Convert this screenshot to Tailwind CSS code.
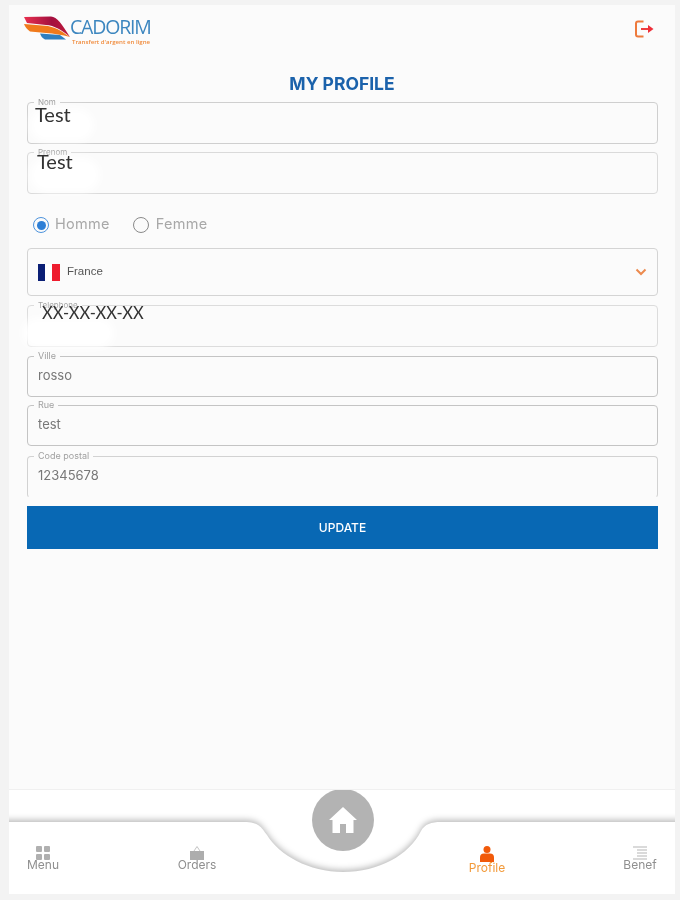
<!DOCTYPE html>
<html lang="en">
<head>
    <meta charset="UTF-8">
    <meta name="viewport" content="width=device-width, initial-scale=1.0">
    <title>Cadorim - My Profile</title>
    <script src="https://cdn.jsdelivr.net/npm/@tailwindcss/browser@4"></script>
</head>
<body class="bg-[#f3f3f3]">
    <div class="h-[900px] w-[680px] overflow-hidden pt-[5px] pl-[9px] pr-[5px] pb-[6px] font-['Inter',sans-serif] blur-[0.6px]">
        <div class="flex h-full flex-col bg-[#fbfbfb]">

            <!-- header -->
            <header class="flex h-[60px] shrink-0 items-start justify-between pl-[15px] pr-[21px]">
                <div class="flex pt-[11px]">
                    <svg width="47" height="24" viewBox="0 0 47 24" class="shrink-0">
                        <defs>
                            <linearGradient id="wingTop" x1="0" y1="0" x2="1" y2="0">
                                <stop offset="0" stop-color="#e8304f"/>
                                <stop offset="0.6" stop-color="#a3103f"/>
                                <stop offset="1" stop-color="#c01a3a"/>
                            </linearGradient>
                        </defs>
                        <path d="M0 1 L27 0.500 C33 1 38 8 46 21 C38 14 30 9.500 22 9 L3 7 Z" fill="url(#wingTop)"/>
                        <path d="M0 8 L24 10 C34 12 40 17 46 21 C38 19 30 17.500 22 17 L6 15.500 C3 13 1 11 0 8 Z" fill="#f07a1c"/>
                        <path d="M16 17.500 L36 19 L42 23.500 L21 23.500 C18 22 17 20 16 17.500 Z" fill="#2f7fc0"/>
                    </svg>
                    <div class="ml-[-1px] flex w-[82px] flex-col">
                        <span class="font-['Open_Sans',sans-serif] text-[19.500px] leading-[22px] tracking-[-1.200px] text-[#3c86bf]">CADORIM</span>
                        <span class="pl-[2px] font-['Open_Sans',sans-serif] text-[6.100px] font-semibold leading-[8px] whitespace-nowrap text-[#f08a3a]">Transfert d'argent en ligne</span>
                    </div>
                </div>
                <svg width="19" height="18" viewBox="0 0 19 18" fill="none" class="mt-[15px]">
                    <path d="M8.500 1.500 H3 Q1 1.500 1 3.500 V14.500 Q1 16.500 3 16.500 H8.500" stroke="#ee7a3c" stroke-width="2"/>
                    <path d="M6 9 H14" stroke="#ee3d3d" stroke-width="2"/>
                    <path d="M13 5 L18.500 9 L13 13 Z" fill="#ee2f3a"/>
                </svg>
            </header>

            <h1 class="h-[37px] shrink-0 text-center text-[17.500px] font-bold leading-[38px] text-[#1b62ab]">MY PROFILE</h1>

            <!-- form -->
            <form class="flex flex-col pl-[18px] pr-[17px]">
                <div class="relative h-[42px] rounded-[4px] border-[1.500px] border-[#cfcfcf]">
                    <span class="absolute top-[-5px] left-[6px] bg-[#fbfbfb] px-[4px] text-[8px] leading-[9px] text-[#9a9a9a]">Nom</span>
                    <div class="absolute top-[6px] left-[2px] h-[32px] w-[64px] rounded-full bg-white blur-[4px]"></div>
                    <p class="relative pl-[7px] font-['Lato',sans-serif] text-[20px] leading-[22px] text-[#333]">Test</p>
                </div>

                <div class="relative mt-[8px] h-[42px] rounded-[4px] border-[1.500px] border-[#dadada]">
                    <span class="absolute top-[-5px] left-[6px] bg-[#fbfbfb] px-[4px] text-[8px] leading-[9px] text-[#a5a5a5]">Prenom</span>
                    <div class="absolute top-[5px] left-[2px] h-[34px] w-[70px] rounded-full bg-white blur-[4px]"></div>
                    <p class="relative mt-[-2px] pl-[9px] font-['Lato',sans-serif] text-[20px] leading-[20px] text-[#333]">Test</p>
                </div>

                <div class="mt-[21px] mb-[13px] flex h-[20px] items-center pl-[6px] text-[14.500px] tracking-[0.300px] text-[#a8a8a8]">
                    <span class="flex h-[16px] w-[16px] items-center justify-center rounded-full border-[1.500px] border-[#4d93dc]">
                        <span class="h-[9px] w-[9px] rounded-full bg-[#2e7fd6]"></span>
                    </span>
                    <span class="ml-[6px] mt-[-2px]">Homme</span>
                    <span class="ml-[23px] h-[16px] w-[16px] rounded-full border-[1.500px] border-[#8a8a8a]"></span>
                    <span class="ml-[7px] mt-[-2px]">Femme</span>
                </div>

                <div class="flex h-[48px] items-center rounded-[4px] border-[1.500px] border-[#d4d4d4] pl-[10px] pr-[10px]">
                    <span class="flex h-[17px] w-[22px] shrink-0">
                        <span class="w-[7px] bg-[#0b1f75]"></span>
                        <span class="w-[7px] bg-white"></span>
                        <span class="w-[8px] bg-[#ee1c2e]"></span>
                    </span>
                    <span class="ml-[7px] mt-[-1px] font-['Liberation_Sans',sans-serif] text-[11.500px] text-[#555]">France</span>
                    <svg width="12" height="8" viewBox="0 0 12 8" fill="none" class="ml-auto">
                        <path d="M1.500 1.500 L6 6 L10.500 1.500" stroke="#ec8a4e" stroke-width="2"/>
                    </svg>
                </div>

                <div class="relative mt-[9px] h-[42px] rounded-[4px] border-[1.500px] border-[#dcdcdc]">
                    <span class="absolute top-[-5px] left-[6px] bg-[#fbfbfb] px-[4px] text-[8px] leading-[9px] text-[#a5a5a5]">Telephone</span>
                    <div class="absolute top-[12px] left-[-6px] h-[30px] w-[92px] rounded-full bg-white blur-[4px]"></div>
                    <p class="relative pl-[14px] font-['Lato',sans-serif] text-[16.500px] leading-[14px] text-[#333]">XX-XX-XX-XX</p>
                </div>

                <div class="relative mt-[9px] h-[41px] rounded-[4px] border-[1.500px] border-[#c4c4c4]">
                    <span class="absolute top-[-6px] left-[6px] bg-[#fbfbfb] px-[4px] text-[9px] leading-[10px] text-[#a0a0a0]">Ville</span>
                    <p class="pl-[10px] pt-[9px] text-[13px] leading-[18px] text-[#777]">rosso</p>
                </div>

                <div class="relative mt-[8px] h-[41px] rounded-[4px] border-[1.500px] border-[#c4c4c4]">
                    <span class="absolute top-[-6px] left-[6px] bg-[#fbfbfb] px-[4px] text-[9px] leading-[10px] text-[#a0a0a0]">Rue</span>
                    <p class="pl-[10px] pt-[9px] text-[13px] leading-[18px] text-[#777]">test</p>
                </div>

                <div class="relative mt-[10px] h-[42px] rounded-[4px] border-[1.500px] border-[#d2d2d2] border-b-transparent">
                    <span class="absolute top-[-6px] left-[6px] bg-[#fbfbfb] px-[4px] text-[9px] leading-[10px] text-[#a0a0a0]">Code postal</span>
                    <p class="pl-[10px] pt-[9px] text-[13px] leading-[18px] text-[#777]">12345678</p>
                </div>

                <button type="button" class="mt-[8px] h-[43px] bg-[#0868b4] text-[12px] font-medium text-white">UPDATE</button>
            </form>

            <!-- bottom nav -->
            <footer class="relative mt-auto h-[105px] shrink-0 overflow-hidden border-t border-[#f0f0f0] bg-white">
                <svg width="686" height="124" viewBox="-10 0 686 124" class="absolute top-[-1px] left-[-10px] drop-shadow-[0_-2px_3px_rgba(0,0,0,0.28)]">
                    <path d="M-10 33 H235 C250 33 252 38 258 46 C270 66 300 83 334 83 C370 83 400 66 412 42 C416 35 422 33 432 33 H676 V124 H-10 Z" fill="#fff"/>
                </svg>
                <a class="absolute top-[-1px] left-[303px] flex h-[62px] w-[62px] items-center justify-center rounded-full bg-[#b3b3b3]">
                    <svg width="30" height="28" viewBox="0 0 30 28" fill="#fff">
                        <path d="M15 1 L29 14 L25.500 14 L25.500 27 L18 27 L18 18 L12 18 L12 27 L4.500 27 L4.500 14 L1 14 Z"/>
                    </svg>
                </a>
                <nav class="relative flex pl-[4px] pt-[56px] text-[12px] leading-[14px] text-[#8f8f8f]">
                    <a class="flex w-[60px] flex-col items-center">
                        <svg width="14" height="14" viewBox="0 0 14 14" fill="#b0b0b0">
                            <rect x="0" y="0" width="6" height="6" rx="1"/><rect x="8" y="0" width="6" height="6" rx="1"/>
                            <rect x="0" y="8" width="6" height="6" rx="1"/><rect x="8" y="8" width="6" height="6" rx="1"/>
                        </svg>
                        <span class="mt-[-2px]">Menu</span>
                    </a>
                    <a class="ml-[94px] flex w-[60px] flex-col items-center">
                        <svg width="14" height="14" viewBox="0 0 14 14" fill="#adadad">
                            <path d="M0 5 H14 V14 H0 Z"/><path d="M4 5 L7 0.500 L10 5" fill="none" stroke="#c4c4c4" stroke-width="1"/>
                        </svg>
                        <span class="mt-[-2px]">Orders</span>
                    </a>
                    <a class="ml-[230px] flex w-[60px] flex-col items-center text-[#f29a3a]">
                        <svg width="14" height="16" viewBox="0 0 14 16" fill="#f15a0a">
                            <circle cx="7" cy="3.500" r="3.500"/><path d="M0 16 V11.500 Q0 7.500 4 7.500 H10 Q14 7.500 14 11.500 V16 Z"/>
                        </svg>
                        <span class="mt-[-1px]">Profile</span>
                    </a>
                    <a class="ml-[93px] flex w-[60px] flex-col items-center">
                        <svg width="14" height="14" viewBox="0 0 14 14" stroke="#b5b5b5" stroke-width="1.200">
                            <path d="M0 1 H14 M4 4 H14 M4 7 H14 M4 10 H14 M0 13 H14"/>
                        </svg>
                        <span class="mt-[-2px]">Benef</span>
                    </a>
                </nav>
            </footer>
        </div>
    </div>
</body>
</html>
